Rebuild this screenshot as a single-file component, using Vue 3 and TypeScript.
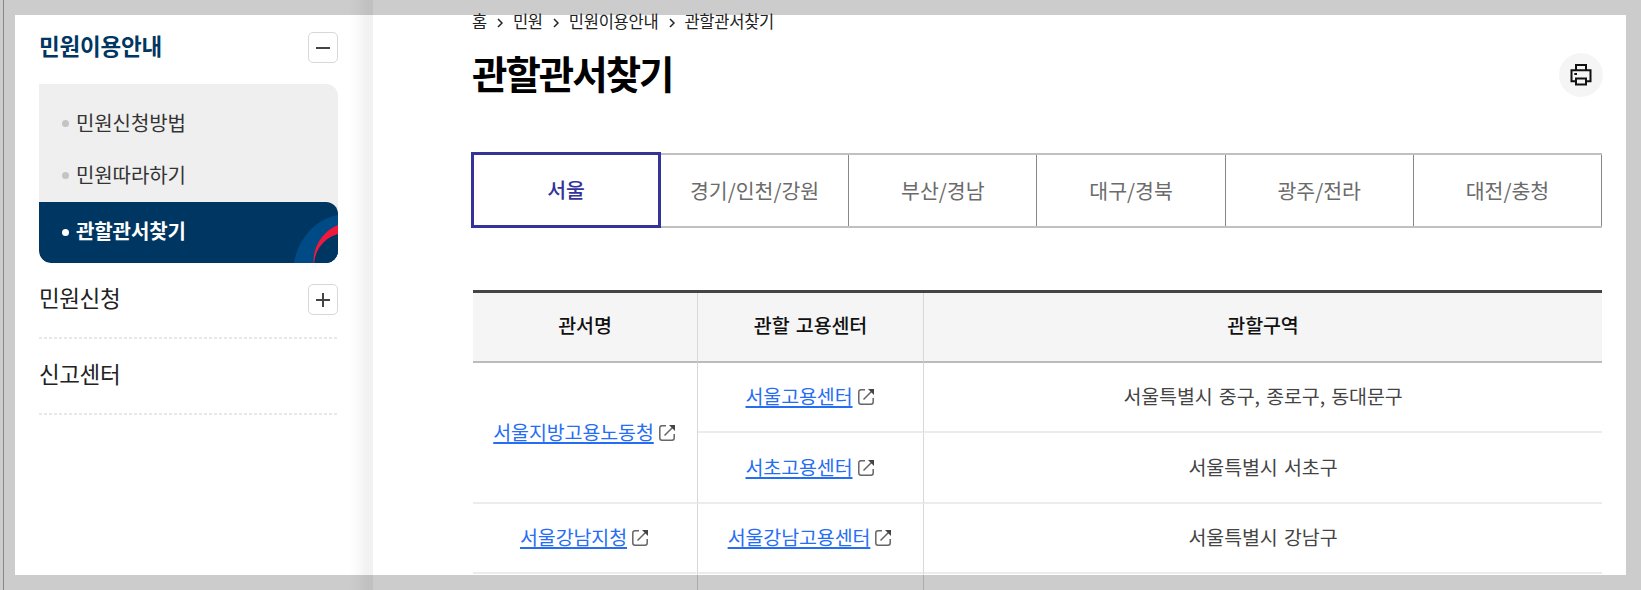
<script setup lang="ts">
interface Office { name: string; span: number; center: string; area: string }

const crumbs: string[] = ['홈', '민원', '민원이용안내', '관할관서찾기']
const subMenu: string[] = ['민원신청방법', '민원따라하기', '관할관서찾기']
const tabs: string[] = ['서울', '경기/인천/강원', '부산/경남', '대구/경북', '광주/전라', '대전/충청']
const offices: Office[] = [
  { name: '서울지방고용노동청', span: 2, center: '서울고용센터', area: '서울특별시 중구, 종로구, 동대문구' },
  { name: '', span: 0, center: '서초고용센터', area: '서울특별시 서초구' },
  { name: '서울강남지청', span: 1, center: '서울강남고용센터', area: '서울특별시 강남구' },
  { name: '', span: 1, center: '', area: '' },
]
</script>

<template>
  <div class="page">
    <aside class="side">
      <div class="group first">
        <strong>민원이용안내</strong>
        <button class="toggle" aria-label="접기">
          <svg width="16" height="16" viewBox="0 0 16 16"><path d="M1 8H15" /></svg>
        </button>
      </div>
      <ul class="sub">
        <li v-for="(item, i) in subMenu" :key="item" :class="{ on: i === 2 }">
          <i class="dot"></i><span>{{ item }}</span>
          <svg v-if="i === 2" class="swirl" width="45" height="60" viewBox="0 0 45 60">
            <path d="M.8 60C5 36 22 16 45 12V60Z" fill="#004a85" />
            <path d="M20.5 60C20 43 30 28 45 22V31C32 35 22 46 21.5 60Z" fill="#f0193c" />
            <path d="M21.5 60C22 46 32 35 45 31V60Z" fill="#003662" />
          </svg>
        </li>
      </ul>
      <div class="group second">
        <span>민원신청</span>
        <button class="toggle" aria-label="펼치기">
          <svg width="16" height="16" viewBox="0 0 16 16"><path d="M1 8H15M8 1V15" /></svg>
        </button>
      </div>
      <div class="group third"><span>신고센터</span></div>
    </aside>

    <main class="main">
      <nav class="crumbs">
        <template v-for="(c, i) in crumbs" :key="c">
          <svg v-if="i > 0" class="chev" width="6" height="10" viewBox="0 0 6 10"><path d="M1 1L5 5L1 9" /></svg>
          <span>{{ c }}</span>
        </template>
      </nav>
      <header class="head">
        <h1>관할관서찾기</h1>
        <button class="print" aria-label="인쇄">
          <svg width="24" height="24" viewBox="0 0 24 24">
            <path d="M7 7V2H17V7M6.5 18.3H2.5V7.3H21.5V18.3H17.5M7 15.5H17V21.5H7ZM5.3 11H8" />
          </svg>
        </button>
      </header>
      <div class="tabs">
        <button v-for="(t, i) in tabs" :key="t" class="tab" :class="{ on: i === 0 }">{{ t }}</button>
      </div>
      <table>
        <colgroup><col class="c1" /><col class="c2" /><col /></colgroup>
        <thead><tr><th>관서명</th><th>관할 고용센터</th><th>관할구역</th></tr></thead>
        <tbody>
          <tr v-for="(o, i) in offices" :key="i" :class="'r' + i">
            <td v-if="o.span" :rowspan="o.span">
              <template v-if="o.name"><a>{{ o.name }}</a><svg class="ext" width="16" height="16" viewBox="0 0 16 16"><path d="M7 .8H3Q.8 .8 .8 3V13Q.8 15.2 3 15.2H13Q15.2 15.2 15.2 13V9M5.5 10.5L14 2" /><path class="tip" d="M10 0H16V6Z" /></svg></template>
            </td>
            <td>
              <template v-if="o.center"><a>{{ o.center }}</a><svg class="ext" width="16" height="16" viewBox="0 0 16 16"><path d="M7 .8H3Q.8 .8 .8 3V13Q.8 15.2 3 15.2H13Q15.2 15.2 15.2 13V9M5.5 10.5L14 2" /><path class="tip" d="M10 0H16V6Z" /></svg></template>
            </td>
            <td>{{ o.area }}</td>
          </tr>
        </tbody>
      </table>
    </main>
    <div class="frame"></div>
  </div>
</template>

<style>
html, body { margin: 0; overflow: hidden; }
</style>

<style scoped>
.page {
  position: relative;
  display: flex;
  width: 1641px;
  height: 590px;
  overflow: hidden;
  box-sizing: border-box;
  background: #fff;
  color: #222;
  font-family: "Noto Sans CJK KR", "Noto Sans", sans-serif;
}
.page * { box-sizing: border-box; }
button { font: inherit; padding: 0; margin: 0; background: none; border: 0; }
.frame { position: absolute; inset: 0; border: 15px solid rgba(0, 0, 0, .2); pointer-events: none; }
.side {
  flex: none;
  width: 370px;
  height: 590px;
  margin-left: 3px;
  padding: 0 35px;
  border-left: 1px solid #aaa;
  background: linear-gradient(to left, #f1f1f1 0, #f2f2f2 7px, #f9f9f9 14px, #fff 23px);
}
.group { display: flex; align-items: center; justify-content: space-between; font-size: 22.5px; letter-spacing: -.4px; line-height: 32px; color: #222; }
.group span, .group strong { padding-bottom: 5px; }
.first { height: 84px; padding-top: 11px; }
.first strong { color: #003662; font-weight: 700; letter-spacing: -.2px; }
.second, .third {
  height: 76px;
  padding-bottom: 3px;
  background: repeating-linear-gradient(to right, #e8e8e8 0 3px, #fff 3px 5px) left bottom / 100% 2px no-repeat;
}
.toggle { display: flex; align-items: center; justify-content: center; width: 30px; height: 31px; border: 1.5px solid #d8d8d8; border-radius: 5px; background: #fff; }
.toggle path { fill: none; stroke: #444; stroke-width: 2; }
.sub { list-style: none; height: 179px; margin: 0; padding: 13px 0 0; background: #efefef; border-radius: 0 12px 12px 12px; overflow: hidden; }
.sub li { position: relative; display: flex; align-items: center; height: 52px; padding-left: 23px; font-size: 20px; letter-spacing: -.1px; color: #333; }
.sub li span { padding-bottom: 2px; }
.sub li.on { height: 61px; margin-top: 1px; background: #003662; color: #fff; font-weight: 700; border-radius: 0 12px 12px 12px; overflow: hidden; }
.sub li.on span { padding-bottom: 5px; }
.dot { width: 7px; height: 7px; margin-right: 7px; border-radius: 50%; background: #c4c4c4; }
.on .dot { background: #fff; }
.swirl { position: absolute; right: 0; bottom: 0; }
.main { width: 1130px; margin-left: 99px; }
.crumbs { display: flex; align-items: center; height: 42px; color: #222; font-size: 16.5px; letter-spacing: -.25px; }
.chev { margin: 3px 9.5px 0 10.5px; }
.chev path { fill: none; stroke: #222; stroke-width: 1.5; }
.head { display: flex; align-items: center; justify-content: space-between; height: 66px; margin-right: -1px; }
h1 { margin: 0; padding-bottom: 7px; font-size: 38.5px; font-weight: 700; letter-spacing: -2px; color: #000; line-height: 56px; }
.print { display: flex; align-items: center; justify-content: center; width: 44px; height: 44px; border-radius: 50%; background: #f5f5f5; }
.print path { fill: none; stroke: #111; stroke-width: 2; }
.tabs { display: flex; height: 75px; margin-top: 45px; border: solid #c0c0c0; border-width: 2px 0; }
.tab { flex: 1; padding-bottom: 2px; border-right: 1px solid #888; color: #6b6b6b; font-size: 20.5px; letter-spacing: 0; }
.tab.on { position: relative; margin: -3px 0 -2px -1px; flex: 0 0 190px; border: 3px solid #339; color: #339; font-weight: 500; }
table { width: 1129px; margin: 62px 0 0 1px; table-layout: fixed; border-collapse: separate; border-spacing: 0; border-top: 3px solid #444; text-align: center; }
.c1 { width: 225px; }
.c2 { width: 226px; }
th, td { height: 70px; padding: 0 0 2px; border-right: 1px solid #d8d8d8; border-bottom: 2px solid #ececec; font-size: 19.5px; line-height: 28px; letter-spacing: -.1px; word-spacing: 2px; vertical-align: middle; }
th:last-child, td:last-child { border-right: 0; }
th { padding-bottom: 4px; background: #f5f5f5; color: #111; font-weight: 500; border-bottom-color: #bbb; }
td { color: #444; }
.r1 td { height: 71px; }
a { color: #256ef4; text-decoration: underline; text-decoration-thickness: 2px; text-underline-offset: 2px; }
.ext { margin: 0 2px 0 5px; vertical-align: -1px; }
.ext path { fill: none; stroke: #666; stroke-width: 1.5; }
.ext .tip { fill: #444; stroke: none; }
</style>
